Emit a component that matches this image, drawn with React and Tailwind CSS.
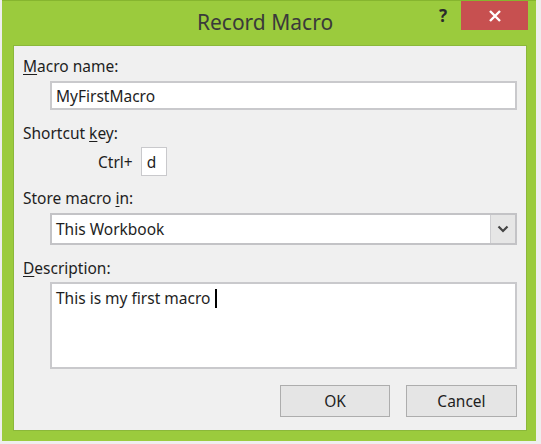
import React from 'react';

const font = { fontFamily: "'Noto Sans', 'Open Sans', sans-serif" };

function U({ children }) {
    return <span className="underline underline-offset-2">{children}</span>;
}

export default function App() {
    return (
        <div className="w-[541px] h-[444px] bg-[#eeeeee] pl-[2px] overflow-hidden text-[#1e1e1e]" style={font}>
            <div className="w-[534px] h-[441px] bg-[#9bcb3d] border-t border-[#86b52f] flex flex-col">

                {/* title bar */}
                <div className="h-[44px] flex items-start">
                    <div className="flex-1" />
                    <div className="pt-[7px] text-[21px] leading-[28px] text-[#3a3a3a]">Record Macro</div>
                    <div className="flex-1 flex justify-end items-start pr-[8px]">
                        <span className="mt-[4px] mr-[14px] text-[17px] font-bold leading-[22px] text-[#2a2a2a]">?</span>
                        <button className="w-[67px] h-[29px] bg-[#c75050] flex items-center justify-center">
                            <svg width="14" height="14" viewBox="0 0 14 14">
                                <path d="M2 2 L12 12 M12 2 L2 12" stroke="#fff" strokeWidth="2.4" />
                            </svg>
                        </button>
                    </div>
                </div>

                {/* body */}
                <div className="ml-[11px] w-[514px] h-[386px] bg-[#f0f0f0] border border-[#8bb83a] pt-[10px] pl-[9px] pr-[9px] text-[15.5px] leading-[20px]">
                    <div><U>M</U>acro name:</div>
                    <div className="mt-[5px] ml-[27px] h-[29px] bg-white border-2 border-[#c9c9cc] flex items-center pl-[4px]">MyFirstMacro</div>

                    <div className="mt-[13px]">Shortcut <U>k</U>ey:</div>
                    <div className="mt-[4px] flex items-center">
                        <span className="ml-[75px]">Ctrl+</span>
                        <div className="ml-[8px] w-[26px] h-[29px] bg-white border border-[#c9c9cc] flex items-center pl-[5px]">d</div>
                    </div>

                    <div className="mt-[12px]">Store macro <U>i</U>n:</div>
                    <div className="mt-[5px] ml-[27px] h-[32px] bg-white border-2 border-[#c3c3c6] flex items-center">
                        <span className="flex-1 pl-[4px]">This Workbook</span>
                        <div className="w-[25px] h-full bg-[#e6e6e6] border-l border-[#cfcfd2] flex items-center justify-center">
                            <svg width="12" height="8" viewBox="0 0 12 8">
                                <path d="M1.5 1.5 L6 6 L10.5 1.5" fill="none" stroke="#444" strokeWidth="2.2" />
                            </svg>
                        </div>
                    </div>

                    <div className="mt-[13px]"><U>D</U>escription:</div>
                    <div className="mt-[4px] ml-[27px] h-[87px] bg-white border-2 border-[#c9c9cc] pl-[4px] pt-[4px] flex items-start">
                        <span>This is my first macro</span>
                        <span className="ml-[5px] mt-[1px] w-[1.5px] h-[19px] bg-black" />
                    </div>

                    <div className="mt-[16px] flex justify-end gap-[16px]">
                        <button className="w-[110px] h-[32px] bg-[#e5e5e5] border border-[#adadad] text-[15.5px]">OK</button>
                        <button className="w-[111px] h-[32px] bg-[#e5e5e5] border border-[#adadad] text-[15.5px]">Cancel</button>
                    </div>
                </div>
            </div>
        </div>
    );
}
